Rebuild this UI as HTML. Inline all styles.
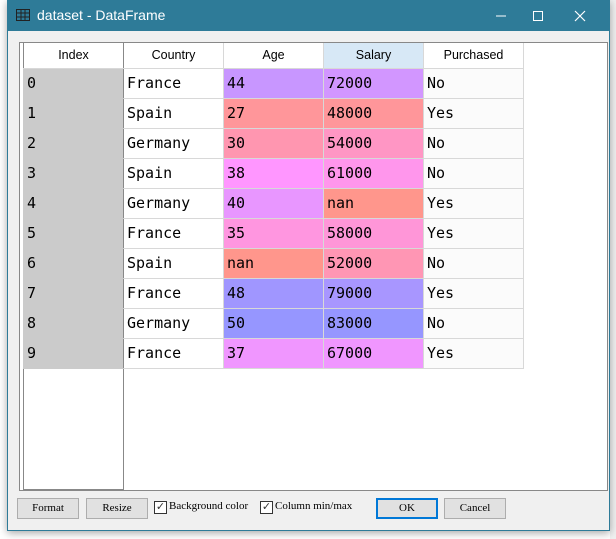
<!DOCTYPE html>
<html><head><style>
body{margin:0;width:616px;height:539px;background:#fff;position:relative;overflow:hidden;font-family:"Liberation Sans",sans-serif}
.win{position:absolute;left:7px;top:0;width:603px;height:531px;background:#f0f0f0;border:1px solid #2e7b98;box-sizing:border-box;box-shadow:0 2px 8px rgba(0,0,0,.35)}
.title{position:absolute;left:-1px;top:-1px;width:603px;height:31px;background:#2e7b98;color:#fff;font-size:14px}
.title span{position:absolute;left:30px;top:7px}
.frame{position:absolute;left:11px;top:41px;width:589px;height:449px;border:1px solid #888;background:#fff;box-sizing:border-box}
.idx{position:absolute;left:15px;top:42px;width:101px;height:447px;border:1px solid #888;border-top:none;box-sizing:border-box;background:#fff}
table{position:absolute;left:15px;top:42px;border-collapse:collapse}
td,th{width:100px;height:30px;padding:0 0 0 3px;box-sizing:border-box;border:1px solid #d8d8d8;font-family:"DejaVu Sans Mono","Liberation Mono",monospace;font-size:15px;text-align:left;color:#000}
th{height:25px;font-family:"Liberation Sans",sans-serif;font-weight:normal;font-size:12.5px;text-align:center;background:#fff;padding:0;border-top:none}
td.i{background:#cbcbcb;border-color:#cbcbcb;border-right:1px solid #888}
th.i{border-right:1px solid #888;border-left:1px solid #888;color:#000}
td.c{background:#fff}td.p{background:#fbfbfb}
.btn{position:absolute;top:497px;height:21px;background:#e1e1e1;border:1px solid #adadad;box-sizing:border-box;font-family:"Liberation Serif",serif;font-size:11px;text-align:center;line-height:19px}
.cb{position:absolute;top:500px;width:13px;height:13px;border:1px solid #333;background:#fff;box-sizing:border-box;font-size:11px;line-height:11px;text-align:center;color:#333}
.lbl{position:absolute;top:499px;font-family:"Liberation Serif",serif;font-size:11px;white-space:nowrap}
</style></head><body>
<div style="position:absolute;left:610px;top:0;width:6px;height:539px;background:#f0f0f0"></div>
<div class="win">
<div class="title"><svg style="position:absolute;left:9px;top:9px" width="14" height="12"><rect x="0.5" y="0.5" width="13" height="11" fill="none" stroke="#222"/><path d="M0 4h14M0 8h14M5 0v12M9 0v12" stroke="#222"/></svg><span>dataset - DataFrame</span>
<svg style="position:absolute;left:480px;top:8px" width="110" height="16"><path d="M9 8h10" stroke="#fff"/><rect x="46.5" y="3.5" width="9" height="9" fill="none" stroke="#fff"/><path d="M88 3l10 10M98 3l-10 10" stroke="#fff" stroke-width="1.2"/></svg></div>
<div class="frame"></div>
<div class="idx"></div>
<table>
<tr><th class="i">Index</th><th>Country</th><th>Age</th><th style="background:#d7e8f6">Salary</th><th>Purchased</th></tr>
<tr><td class="i">0</td><td class="c">France</td><td style="background:#c896ff">44</td><td style="background:#d296ff">72000</td><td class="p">No</td></tr>
<tr><td class="i">1</td><td class="c">Spain</td><td style="background:#ff969a">27</td><td style="background:#ff969a">48000</td><td class="p">Yes</td></tr>
<tr><td class="i">2</td><td class="c">Germany</td><td style="background:#ff96b0">30</td><td style="background:#ff96c4">54000</td><td class="p">No</td></tr>
<tr><td class="i">3</td><td class="c">Spain</td><td style="background:#ff96ff">38</td><td style="background:#ff96ec">61000</td><td class="p">No</td></tr>
<tr><td class="i">4</td><td class="c">Germany</td><td style="background:#e896ff">40</td><td style="background:#ff968c">nan</td><td class="p">Yes</td></tr>
<tr><td class="i">5</td><td class="c">France</td><td style="background:#ff96e0">35</td><td style="background:#ff96d8">58000</td><td class="p">Yes</td></tr>
<tr><td class="i">6</td><td class="c">Spain</td><td style="background:#ff968c">nan</td><td style="background:#ff96b4">52000</td><td class="p">No</td></tr>
<tr><td class="i">7</td><td class="c">France</td><td style="background:#a096ff">48</td><td style="background:#a896ff">79000</td><td class="p">Yes</td></tr>
<tr><td class="i">8</td><td class="c">Germany</td><td style="background:#9696ff">50</td><td style="background:#9696ff">83000</td><td class="p">No</td></tr>
<tr><td class="i">9</td><td class="c">France</td><td style="background:#f096ff">37</td><td style="background:#f096ff">67000</td><td class="p">Yes</td></tr>
</table>
<div class="btn" style="left:9px;width:62px">Format</div>
<div class="btn" style="left:78px;width:62px">Resize</div>
<div class="cb" style="left:146px">✓</div><div class="lbl" style="left:161px">Background color</div>
<div class="cb" style="left:252px">✓</div><div class="lbl" style="left:267px">Column min/max</div>
<div class="btn" style="left:368px;width:62px;border:2px solid #0078d7;line-height:17px">OK</div>
<div class="btn" style="left:436px;width:62px">Cancel</div>
</div>
</body></html>
